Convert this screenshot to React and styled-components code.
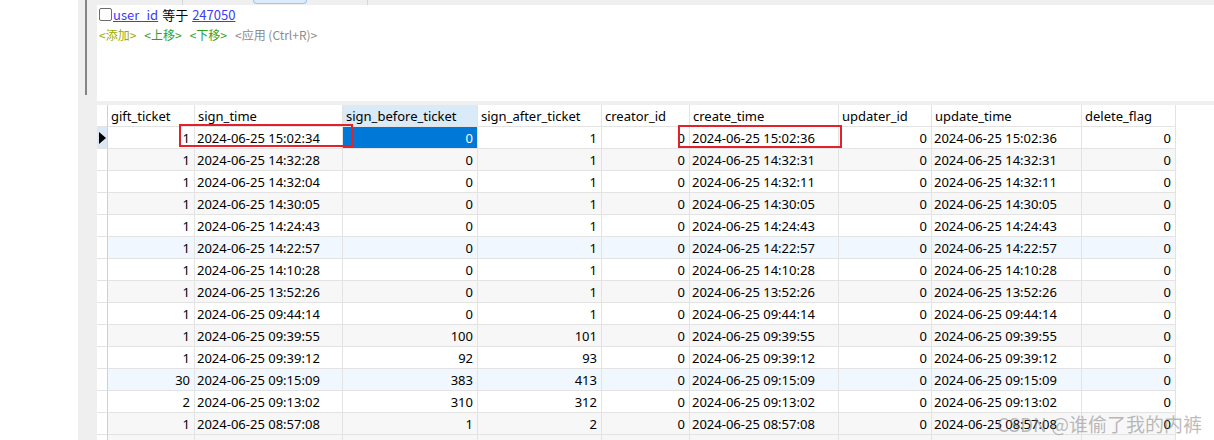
import React from "react";
import styled, { createGlobalStyle } from "styled-components";

const GlobalStyle = createGlobalStyle`
  html, body {
    margin: 0;
    padding: 0;
    background: #ffffff;
    font-family: "Noto Sans", "Noto Sans CJK SC", sans-serif;
  }
`;

const columns = [
  { key: "gift_ticket", width: 87, align: "right" },
  { key: "sign_time", width: 148, align: "left" },
  { key: "sign_before_ticket", width: 135, align: "right" },
  { key: "sign_after_ticket", width: 124, align: "right" },
  { key: "creator_id", width: 88, align: "right" },
  { key: "create_time", width: 149, align: "left" },
  { key: "updater_id", width: 93, align: "right" },
  { key: "update_time", width: 150, align: "left" },
  { key: "delete_flag", width: 94, align: "right" },
];

const raw = [
  [1, "15:02:34", 0, 1, "15:02:36"],
  [1, "14:32:28", 0, 1, "14:32:31"],
  [1, "14:32:04", 0, 1, "14:32:11"],
  [1, "14:30:05", 0, 1, "14:30:05"],
  [1, "14:24:43", 0, 1, "14:24:43"],
  [1, "14:22:57", 0, 1, "14:22:57"],
  [1, "14:10:28", 0, 1, "14:10:28"],
  [1, "13:52:26", 0, 1, "13:52:26"],
  [1, "09:44:14", 0, 1, "09:44:14"],
  [1, "09:39:55", 100, 101, "09:39:55"],
  [1, "09:39:12", 92, 93, "09:39:12"],
  [30, "09:15:09", 383, 413, "09:15:09"],
  [2, "09:13:02", 310, 312, "09:13:02"],
  [1, "08:57:08", 1, 2, "08:57:08"],
];

const rows = raw.map(([g, s, b, a, c]) => [
  g,
  `2024-06-25 ${s}`,
  b,
  a,
  0,
  `2024-06-25 ${c}`,
  0,
  `2024-06-25 ${c}`,
  0,
]);

const gridCols = `11px ${columns.map((c) => c.width + "px").join(" ")} 1fr`;

const Page = styled.div`
  display: flex;
  width: 1214px;
  height: 440px;
  overflow: hidden;
  font-size: 13px;
  color: #000;
`;

const LeftBlank = styled.div`
  width: 78px;
  flex-shrink: 0;
  background: #ffffff;
`;

const Gutter = styled.div`
  width: 19px;
  flex-shrink: 0;
  background: #efefef;
  padding-left: 7px;
  box-sizing: border-box;
`;

const ScrollThumb = styled.div`
  width: 2px;
  height: 95px;
  background: #858585;
`;

const Main = styled.div`
  flex: 1;
  display: flex;
  flex-direction: column;
  background: #efefef;
  min-width: 0;
`;

const TopStrip = styled.div`
  height: 5px;
  flex-shrink: 0;
  display: flex;
  background: #efefef;
`;

const TabSep = styled.div`
  width: ${(p) => p.w}px;
  height: 5px;
  border-right: 1px solid #d6d6d6;
  box-sizing: border-box;
  flex-shrink: 0;
`;

const TabGap = styled.div`
  width: 70px;
  flex-shrink: 0;
`;

const Tab = styled.div`
  width: 52px;
  height: 3px;
  background: #dcecfc;
  border: 1px solid #9cc7f0;
  border-top: none;
  border-radius: 0 0 4px 4px;
  flex-shrink: 0;
`;

const FilterPanel = styled.div`
  height: 96px;
  flex-shrink: 0;
  background: #ffffff;
  padding: 0 0 0 2px;
  box-sizing: border-box;
  font-family: "Noto Sans CJK SC", "Noto Sans", sans-serif;
`;

const FilterLine = styled.div`
  display: flex;
  align-items: center;
  gap: 4px;
  height: 19px;
  font-size: 13px;
`;

const Check = styled.span`
  width: 11px;
  height: 11px;
  border: 1px solid #6c6c6c;
  border-radius: 2px;
  margin-right: -3px;
`;

const Link = styled.span`
  color: #3b3bff;
  text-decoration: underline;
`;

const Actions = styled.div`
  display: flex;
  gap: 8px;
  font-size: 12px;
  height: 16px;
  align-items: center;
  margin-top: 2px;
`;

const Action = styled.span`
  color: ${(p) => p.color};
`;

const Spacer = styled.div`
  height: 4px;
  flex-shrink: 0;
`;

const Table = styled.div`
  flex: 1;
  min-height: 0;
  overflow: hidden;
  background: #ffffff;
  display: grid;
  grid-template-columns: ${gridCols};
  grid-auto-rows: 22px;
  align-content: start;
  position: relative;
`;

const HeadCell = styled.div`
  background: ${(p) => (p.active ? "#d9eaf9" : "#ffffff")};
  border-right: ${(p) => (p.last ? "none" : "1px solid #e3e3e3")};
  border-bottom: ${(p) => (p.last ? "none" : "1px solid #e3e3e3")};
  padding-left: 3px;
  display: flex;
  align-items: center;
  box-sizing: border-box;
  white-space: nowrap;
  overflow: hidden;
`;

const Indicator = styled.div`
  background: ${(p) => (p.current ? "#dbe9f7" : "#ffffff")};
  border-right: 1px solid #d0d0d0;
  border-bottom: 1px solid #e3e3e3;
  box-sizing: border-box;
  display: flex;
  align-items: center;
  justify-content: center;
`;

const Arrow = styled.span`
  width: 0;
  height: 0;
  border-top: 6px solid transparent;
  border-bottom: 6px solid transparent;
  border-left: 7px solid #000;
  margin-left: 1px;
`;

const Cell = styled.div`
  background: ${(p) => (p.selected ? "#0078d7" : p.bg)};
  color: ${(p) => (p.selected ? "#ffffff" : "#000")};
  border-right: 1px solid #e3e3e3;
  border-bottom: 1px solid #e3e3e3;
  box-sizing: border-box;
  display: flex;
  align-items: center;
  justify-content: ${(p) => (p.align === "right" ? "flex-end" : "flex-start")};
  padding: 0 4px 0 2px;
  white-space: nowrap;
  overflow: hidden;
`;

const EmptyCell = styled.div`
  background: #ffffff;
`;

const Mark = styled.div`
  position: absolute;
  left: ${(p) => p.x}px;
  top: ${(p) => p.y}px;
  width: ${(p) => p.w}px;
  height: ${(p) => p.h}px;
  border: 2px solid #e3212b;
  box-sizing: border-box;
  pointer-events: none;
`;

const Watermark = styled.div`
  position: absolute;
  right: 12px;
  top: 305px;
  font-size: 19px;
  color: rgba(120, 120, 120, 0.5);
  font-family: "Noto Sans CJK SC", sans-serif;
  pointer-events: none;
`;

const rowBg = (i) => {
  if (i === 5 || i === 11) return "#f1f7fe";
  return i % 2 === 0 ? "#ffffff" : "#f7f7f7";
};

export default function App() {
  return (
    <>
      <GlobalStyle />
      <Page>
        <LeftBlank />
        <Gutter>
          <ScrollThumb />
        </Gutter>
        <Main>
          <TopStrip>
            <TabSep w={86} />
            <TabGap />
            <Tab />
            <TabSep w={61} />
          </TopStrip>
          <FilterPanel>
            <FilterLine>
              <Check />
              <Link>user_id</Link>
              <span>等于</span>
              <Link>247050</Link>
            </FilterLine>
            <Actions>
              <Action color="#9aab00">&lt;添加&gt;</Action>
              <Action color="#2ea21e">&lt;上移&gt;</Action>
              <Action color="#2ea21e">&lt;下移&gt;</Action>
              <Action color="#8c8c8c">&lt;应用 (Ctrl+R)&gt;</Action>
            </Actions>
          </FilterPanel>
          <Spacer />
          <Table>
            <Indicator />
            {columns.map((c) => (
              <HeadCell key={c.key} active={c.key === "sign_before_ticket"}>
                {c.key}
              </HeadCell>
            ))}
            <HeadCell last />
            {rows.map((r, i) => (
              <React.Fragment key={i}>
                <Indicator current={i === 0}>{i === 0 && <Arrow />}</Indicator>
                {r.map((v, j) => (
                  <Cell
                    key={j}
                    align={columns[j].align}
                    bg={rowBg(i)}
                    selected={i === 0 && j === 2}
                  >
                    {v}
                  </Cell>
                ))}
                <EmptyCell />
              </React.Fragment>
            ))}
            <Indicator />
            {columns.map((c) => (
              <Cell key={c.key} bg="#f7f7f7" />
            ))}
            <EmptyCell />
            <Mark x={82} y={19} w={174} h={23} />
            <Mark x={581} y={20} w={164} h={23} />
            <Watermark>CSDN @谁偷了我的内裤</Watermark>
          </Table>
        </Main>
      </Page>
    </>
  );
}
